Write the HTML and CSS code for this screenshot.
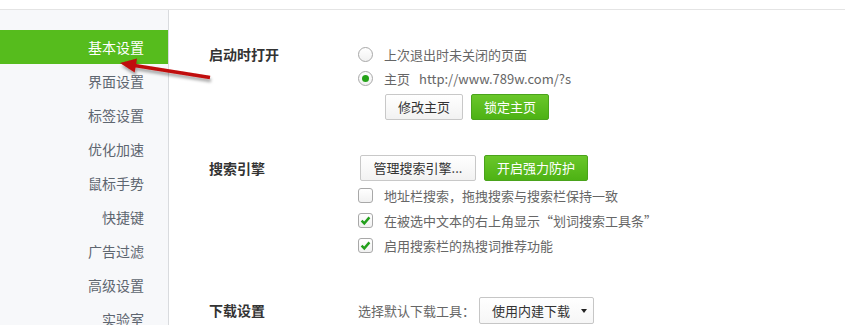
FILE: index.html
```html
<!DOCTYPE html>
<html lang="zh-CN">
<head>
<meta charset="utf-8">
<title>基本设置</title>
<link rel="stylesheet" href="styles.css">
</head>
<body>
<div class="topbar"></div>
<div class="layout">
  <nav class="sidebar">
    <a class="nav-item active">基本设置</a>
    <a class="nav-item">界面设置</a>
    <a class="nav-item">标签设置</a>
    <a class="nav-item">优化加速</a>
    <a class="nav-item">鼠标手势</a>
    <a class="nav-item">快捷键</a>
    <a class="nav-item">广告过滤</a>
    <a class="nav-item">高级设置</a>
    <a class="nav-item">实验室</a>
  </nav>
  <main class="content">
    <section class="section startup">
      <div class="label">启动时打开</div>
      <div class="options">
        <div class="opt"><span class="radio"></span><span>上次退出时未关闭的页面</span></div>
        <div class="opt"><span class="radio checked"></span><span>主页</span><span class="url">http://www.789w.com/?s</span></div>
        <div class="btn-row indent">
          <button class="btn">修改主页</button>
          <button class="btn btn-green">锁定主页</button>
        </div>
      </div>
    </section>
    <section class="section search">
      <div class="label">搜索引擎</div>
      <div class="options">
        <div class="btn-row first">
          <button class="btn btn-manage">管理搜索引擎...</button>
          <button class="btn btn-green">开启强力防护</button>
        </div>
        <div class="check-list">
          <div class="chk-row"><span class="checkbox"></span><span>地址栏搜索，拖拽搜索与搜索栏保持一致</span></div>
          <div class="chk-row"><span class="checkbox checked"><svg viewBox="0 0 15 15" width="15" height="15"><path d="M3.6 7.6 L6.3 10.4 L11.4 4.4" fill="none" stroke="#23a01c" stroke-width="2.4"/></svg></span><span>在被选中文本的右上角显示“划词搜索工具条”</span></div>
          <div class="chk-row"><span class="checkbox checked"><svg viewBox="0 0 15 15" width="15" height="15"><path d="M3.6 7.6 L6.3 10.4 L11.4 4.4" fill="none" stroke="#23a01c" stroke-width="2.4"/></svg></span><span>启用搜索栏的热搜词推荐功能</span></div>
        </div>
      </div>
    </section>
    <section class="section download">
      <div class="label">下载设置</div>
      <div class="options">
        <div class="dl-row">
          <span class="dl-text">选择默认下载工具：</span>
          <div class="select"><span>使用内建下载</span><span class="caret"></span></div>
        </div>
      </div>
    </section>
  </main>
</div>
<svg class="arrow" width="120" height="40" viewBox="110 50 120 40">
  <defs>
    <filter id="shadow" x="-20%" y="-50%" width="140%" height="200%">
      <feDropShadow dx="1" dy="3" stdDeviation="1.6" flood-color="#000" flood-opacity="0.35"/>
    </filter>
  </defs>
  <g filter="url(#shadow)">
    <line x1="133" y1="65.2" x2="210" y2="77.5" stroke="#c00a0a" stroke-width="3.4"/>
    <polygon points="120,63 137,58.4 134.7,72.4" fill="#c00a0a"/>
  </g>
</svg>
</body>
</html>
```

FILE: styles.css
```css
html, body {
  margin: 0;
  padding: 0;
  background: #fff;
  overflow: hidden;
}

body {
  font-family: "Noto Sans CJK SC", "Noto Sans", sans-serif;
  font-size: 13px;
  color: #666;
  position: relative;
  height: 325px;
}

.topbar {
  height: 9px;
  border-bottom: 1px solid #e4e4e4;
  margin-right: 1px;
}

.layout {
  display: flex;
  height: 315px;
}

.sidebar {
  width: 144px;
  padding: 20px 24px 0 0;
  background: #f7f8fa;
  border-right: 1px solid #d9dbde;
  display: flex;
  flex-direction: column;
}

.nav-item {
  display: block;
  height: 34px;
  line-height: 34px;
  text-align: right;
  font-size: 14px;
  color: #5e6670;
  margin-right: -24px;
  padding-right: 24px;
  flex: none;
}

.nav-item.active {
  background: #56bc1d;
  color: #fff;
}

.content {
  flex: 1;
  padding: 32px 0 0 40px;
}

.section {
  display: grid;
  grid-template-columns: 149px 1fr;
}

.label {
  font-size: 14px;
  font-weight: bold;
  color: #333;
}

.startup .label { line-height: 24px; }
.search { margin-top: 35px; }
.search .label { line-height: 26px; }
.download { margin-top: 39px; }
.download .label { line-height: 27px; }

.opt {
  height: 24px;
  display: flex;
  align-items: center;
}

.radio {
  width: 13px;
  height: 13px;
  border: 1px solid #a8a8a8;
  border-radius: 50%;
  background: linear-gradient(#fff, #f1f1f1);
  margin-right: 11px;
  display: flex;
  align-items: center;
  justify-content: center;
  flex: none;
}

.radio.checked::after {
  content: "";
  width: 7px;
  height: 7px;
  border-radius: 50%;
  background: #25a318;
}

.url {
  margin-left: 9px;
}

.btn-row {
  display: flex;
  gap: 8px;
}

.btn-row.indent {
  margin-top: 4px;
  padding-left: 27px;
}

.btn-row.first {
  padding-left: 2px;
}

.btn {
  height: 26px;
  padding: 0 12px;
  border: 1px solid #c8c8c8;
  border-radius: 2px;
  background: linear-gradient(#ffffff, #f2f2f2);
  font-family: inherit;
  font-size: 13px;
  color: #333;
  line-height: 24px;
  cursor: pointer;
}

.btn-manage {
  width: 116px;
  padding: 0;
}

.btn-green {
  background: linear-gradient(#6ac72a, #4db214);
  border-color: #4aa31b;
  color: #fff;
}

.check-list {
  margin-top: 2px;
}

.chk-row {
  height: 25px;
  display: flex;
  align-items: center;
}

.checkbox {
  width: 13px;
  height: 13px;
  border: 1px solid #a8a8a8;
  border-radius: 3px;
  background: linear-gradient(#fff, #f1f1f1);
  margin-right: 11px;
  flex: none;
  position: relative;
}

.checkbox svg {
  position: absolute;
  left: -1px;
  top: -1px;
}

.dl-row {
  display: flex;
  align-items: center;
  height: 27px;
}

.dl-text {
  margin-right: 4px;
}

.select {
  box-sizing: border-box;
  width: 115px;
  height: 27px;
  border: 1px solid #c6c6c6;
  border-radius: 2px;
  background: linear-gradient(#fff, #f6f6f6);
  display: flex;
  align-items: center;
  justify-content: space-between;
  padding: 0 6px 0 12px;
  color: #333;
}

.caret {
  width: 0;
  height: 0;
  border-left: 3.5px solid transparent;
  border-right: 3.5px solid transparent;
  border-top: 4px solid #222;
}

.arrow {
  position: absolute;
  left: 110px;
  top: 50px;
  pointer-events: none;
}
```
